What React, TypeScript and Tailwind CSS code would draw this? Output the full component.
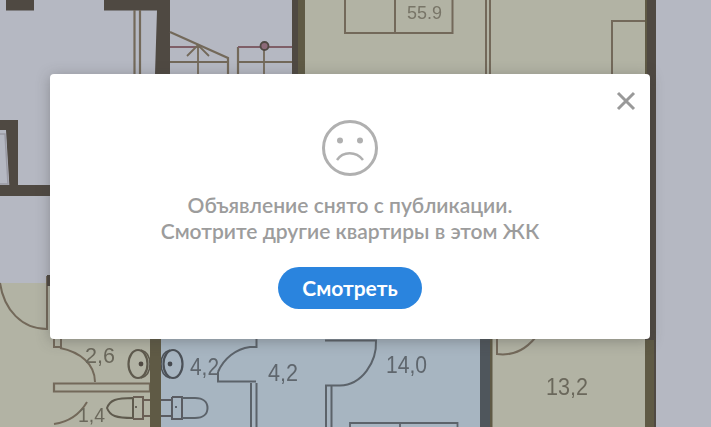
const wall = "#4f4842";
const olive = "#5f5a44";
const line = "#73695a";
const red = "#7f5f68";
const blueLine = "#5c636b";

const FloorPlan = () => (
  <svg viewBox="0 0 711 427" className="absolute inset-0 h-full w-full">
    <defs>
      <filter id="soft">
        <feGaussianBlur stdDeviation="0.7" />
      </filter>
    </defs>
    <g filter="url(#soft)" fill="none">
      {/* rooms */}
      <rect width="711" height="427" fill="#b5b8c2" />
      <rect x="305" y="0" width="340" height="74" fill="#b2b3a4" />
      <rect x="0" y="283" width="150" height="144" fill="#b2b3a4" />
      <rect x="161" y="330" width="320" height="97" fill="#a7b5c1" />
      <rect x="490" y="330" width="156" height="97" fill="#b2b3a4" />

      {/* top left */}
      <rect x="6" y="0" width="28" height="10.500" fill={wall} />
      <rect x="104" y="0" width="66" height="10.500" fill={wall} />
      <path d="M157 10 L170 10 L170 74 L155 74 Z" fill={wall} />
      <path d="M134.500 10V74M140 10V74" stroke={line} strokeWidth="2.200" />

      {/* stairs */}
      <path d="M170 32L228 58V74M238 74V47" stroke={line} strokeWidth="2.200" />
      <path d="M170 47H200M238 47H292" stroke={red} strokeWidth="1.800" />
      <path d="M170 62H228M238 62H292" stroke={line} strokeWidth="1.800" />
      <path d="M198 45V74M187 56L198 45L209 56M264 50V74" stroke={line} strokeWidth="1.800" />
      <circle cx="264.500" cy="46" r="4" stroke={wall} strokeWidth="1.800" fill="#8c6a78" />

      {/* top walls */}
      <rect x="292" y="0" width="6" height="74" fill={wall} />
      <rect x="298" y="0" width="7" height="74" fill={olive} />
      <path d="M345 0V33H452.500V0M395 0V33M486 0V74M490 0V74M612 74V21H645" stroke={line} strokeWidth="2" />
      <rect x="645" y="0" width="11" height="340" fill={wall} />
      <rect x="645" y="0" width="2" height="74" fill={olive} />
      <text x="407" y="19" fontFamily="Liberation Sans" fontSize="18" textLength="35" lengthAdjust="spacingAndGlyphs" fill="#787567" stroke="none">55.9</text>

      {/* left wall */}
      <rect x="0" y="120" width="18" height="10" fill={wall} />
      <path d="M6 130L18 130V196H10Z" fill={wall} />
      <rect x="0" y="185" width="50" height="11" fill={wall} />
      <path d="M0 134H5L8 184H0" stroke="#9a9aa4" strokeWidth="1.500" />
      <path d="M0 283C4 310 22 329 47 329V276" stroke={line} strokeWidth="2" />
      <rect x="47" y="275" width="3" height="11" fill={wall} />

      {/* bottom left */}
      <path d="M54 338V347H61V338" stroke={line} strokeWidth="2" />
      <path d="M60 348C80 352 95 364 95 382" stroke={line} strokeWidth="2" />
      <path d="M54 383.500H150V391.500H54Z" stroke={line} strokeWidth="2.200" />
      <path d="M54 424C68 422 80 414 87 402" stroke={line} strokeWidth="2" />
      <text x="85" y="363" fontFamily="Liberation Sans" fontSize="22" textLength="30" lengthAdjust="spacingAndGlyphs" fill="#6b685b" stroke="none">2,6</text>
      <text x="78" y="422" fontFamily="Liberation Sans" fontSize="20" textLength="27" lengthAdjust="spacingAndGlyphs" fill="#6b685b" stroke="none">1,4</text>

      {/* bathroom */}
      <ellipse cx="138" cy="364" rx="9.500" ry="14" stroke="#5e5a4e" strokeWidth="2.200" />
      <path d="M141 350C148 352 150 358 150 364C150 370 148 376 141 378" stroke="#5e5a4e" strokeWidth="1.600" />
      <ellipse cx="173" cy="364" rx="9.500" ry="14" stroke="#4c5158" strokeWidth="2.200" />
      <path d="M170 350C163 352 161 358 161 364C161 370 163 376 170 378" stroke="#4c5158" strokeWidth="1.600" />
      <circle cx="141" cy="364" r="2.400" fill="#4f4a42" />
      <circle cx="170" cy="364" r="2.400" fill="#444a50" />
      <path d="M107 408C110 400 116 398 133 398V418C116 418 110 416 107 408Z" stroke="#5e5a4e" strokeWidth="2" />
      <path d="M133 397H143V419H133M143 400H150M143 416H150" stroke="#6b5f55" strokeWidth="2" />
      <circle cx="136" cy="407" r="1" fill="#4f4a42" />
      <path d="M161 400H172M161 416H172M172 397H182V419H172V397" stroke="#5a5c62" strokeWidth="2" />
      <circle cx="176" cy="407" r="1" fill="#444a50" />
      <path d="M182 398H195C203 398 207.500 402 207.500 408C207.500 414 203 418 195 418H182" stroke={blueLine} strokeWidth="2" />

      <rect x="150" y="338" width="11" height="89" fill={olive} />

      {/* bottom middle */}
      <text x="190" y="375" fontFamily="Liberation Sans" fontSize="23" textLength="29" lengthAdjust="spacingAndGlyphs" fill="#5f666d" stroke="none">4,2</text>
      <text x="268" y="381" fontFamily="Liberation Sans" fontSize="23" textLength="30" lengthAdjust="spacingAndGlyphs" fill="#5f666d" stroke="none">4,2</text>
      <path d="M218 372V381.500H256M218 372C224 358 236 349 250 347H256.500V339" stroke={blueLine} strokeWidth="2" />
      <path d="M251 383V427M256.500 383V427" stroke={blueLine} strokeWidth="2" />
      <path d="M325 340.500H376C377 362 362 385 340 385.500H326V427M331.500 386V427" stroke={blueLine} strokeWidth="2" />
      <path d="M350 427V423H457.500V427M400 423V427" stroke={blueLine} strokeWidth="1.800" />
      <text x="386" y="373" fontFamily="Liberation Sans" fontSize="23" textLength="41" lengthAdjust="spacingAndGlyphs" fill="#5f666d" stroke="none">14,0</text>

      {/* bottom right */}
      <rect x="480" y="330" width="10" height="97" fill="#50565b" />
      <rect x="490" y="330" width="2.500" height="97" fill={olive} />
      <path d="M497 338V354C512 356 525 350 535 338" stroke={line} strokeWidth="2" />
      <rect x="645" y="340" width="9" height="87" fill={olive} />
      <rect x="654" y="340" width="2" height="87" fill={wall} />
      <text x="546" y="395" fontFamily="Liberation Sans" fontSize="23" textLength="42" lengthAdjust="spacingAndGlyphs" fill="#6b685b" stroke="none">13,2</text>
    </g>
  </svg>
);

const App = () => {
  return (
    <div className="relative h-[427px] w-[711px] overflow-hidden bg-[#b5b8c2] font-['Lato','Noto_Sans',sans-serif]">
      <FloorPlan />
      <div className="relative pl-[50px] pt-[74px]">
        <div className="relative flex h-[265px] w-[600px] flex-col items-center rounded bg-white pt-[45px] shadow-[0_2px_14px_rgba(60,60,60,0.35)]">
          <button className="absolute right-[14px] top-[17px] text-[#999999]">
            <svg width="20" height="20" viewBox="0 0 20 20" fill="none" stroke="currentColor" strokeWidth="3">
              <path d="M2 2L18 18M18 2L2 18" />
            </svg>
          </button>
          <svg width="58" height="58" viewBox="0 0 58 58" fill="none" stroke="#b0b0b0" strokeWidth="3">
            <circle cx="29" cy="29" r="26.500" />
            <circle cx="19" cy="21.500" r="3" fill="#b0b0b0" stroke="none" />
            <circle cx="39" cy="21.500" r="3" fill="#b0b0b0" stroke="none" />
            <path d="M16 41C22 32 35 32 42 41" strokeWidth="2.500" />
          </svg>
          <p className="mt-[15px] text-center text-[21px] font-semibold leading-[26px] text-[#9c9c9c]">
            Объявление снято с публикации.
            <br />
            Смотрите другие квартиры в этом ЖК
          </p>
          <button className="mt-[23px] h-[42px] w-[144px] rounded-full bg-[#2a84de] text-[21px] font-bold text-white">
            Смотреть
          </button>
        </div>
      </div>
    </div>
  );
};

export default App;
